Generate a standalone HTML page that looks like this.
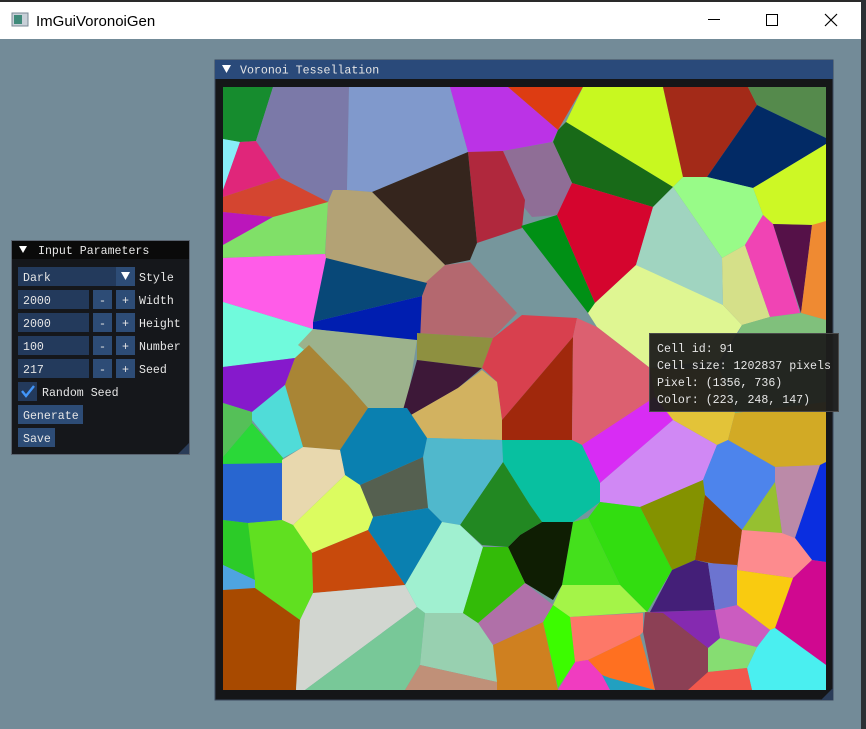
<!DOCTYPE html>
<html><head><meta charset="utf-8"><style>
html,body{margin:0;padding:0;width:866px;height:729px;overflow:hidden;background:#738b98;}
svg{position:absolute;left:0;top:0}
.t{font-family:"Liberation Mono",monospace;font-size:11.6px;fill:#e6e6e6}
</style></head><body>
<svg width="866" height="729" viewBox="0 0 866 729" xmlns="http://www.w3.org/2000/svg">
<rect x="0" y="0" width="866" height="729" fill="#738b98"/>
<rect x="0" y="0" width="866" height="2" fill="#2a2a2a"/>
<rect x="861" y="0" width="5" height="729" fill="#2b2f33"/>
<rect x="0" y="2" width="861" height="37" fill="#ffffff"/>
<rect x="12" y="13" width="16" height="13" fill="#c8d0d8" stroke="#7a8894"/>
<rect x="14" y="15" width="8" height="9" fill="#3f8a7a"/>
<text x="36" y="26" font-family="Liberation Sans,sans-serif" font-size="15" fill="#000">ImGuiVoronoiGen</text>
<line x1="708" y1="19.5" x2="720" y2="19.5" stroke="#000" stroke-width="1"/>
<rect x="766.5" y="14.5" width="11" height="11" fill="none" stroke="#000"/>
<path d="M825 14 L837 26 M837 14 L825 26" stroke="#000" stroke-width="1.2"/>

<rect x="215" y="60" width="618" height="640" fill="#151618" stroke="#3b4a5e"/>
<rect x="215" y="60" width="618" height="19" fill="#2a4a7a"/>
<path d="M222 65 L231 65 L226.5 73 Z" fill="#fff"/>
<text x="240" y="73.5" class="t">Voronoi Tessellation</text>
<path d="M833 688 L833 700 L821 700 Z" fill="#2a3c58"/>

<g>
<rect x="223" y="87" width="603" height="603" fill="#76969c"/>
<polygon fill="#168c2e" points="223,87 273,87 256,141 240,142 223,139"/>
<polygon fill="#7b79a8" points="273,87 349,87 347,190 333,190 328,202 281,178 256,141"/>
<polygon fill="#8099cc" points="349,87 450,87 468,152 372,192 347,190"/>
<polygon fill="#bb33e6" points="450,87 508,87 558,130 552,142 503,151 468,152"/>
<polygon fill="#dd3c12" points="508,87 583,87 558,130"/>
<polygon fill="#c8f820" points="583,87 663,87 683,177 673,187 566,122"/>
<polygon fill="#a32a18" points="663,87 748,87 757,105 707,177 683,177"/>
<polygon fill="#558a4c" points="748,87 826,87 826,138 757,105"/>
<polygon fill="#022a65" points="757,105 826,138 826,144 753,188 707,177"/>
<polygon fill="#cdf825" points="753,188 826,144 826,222 812,225 773,224 763,215"/>
<polygon fill="#98fb88" points="673,187 683,177 707,177 753,188 763,215 745,245 722,258"/>
<polygon fill="#186a18" points="566,122 673,187 653,207 572,183 553,142 558,130"/>
<polygon fill="#8f6e96" points="503,151 553,142 572,183 557,215 532,217 522,205"/>
<polygon fill="#b0283d" points="468,152 503,151 525,200 522,228 477,243"/>
<polygon fill="#35251d" points="372,192 468,152 477,243 470,260 445,265"/>
<polygon fill="#b3a275" points="347,190 372,192 445,265 427,283 422,288 391,276 325,258 328,202 333,190"/>
<polygon fill="#b4686f" points="445,265 470,262 517,313 493,338 417,333 422,295 425,283"/>
<polygon fill="#009015" points="521,226 557,215 595,303 588,313"/>
<polygon fill="#d5052e" points="557,215 572,183 653,207 636,265 595,303"/>
<polygon fill="#a0d4c0" points="673,187 722,258 723,305 688,290 636,265 653,207"/>
<polygon fill="#dff692" points="595,303 636,265 723,305 742,325 720,360 650,368 597,327 588,313"/>
<polygon fill="#d5e089" points="722,258 745,245 770,317 742,325 723,305"/>
<polygon fill="#f044b4" points="745,245 763,215 773,224 800,313 770,317"/>
<polygon fill="#551148" points="773,224 812,225 801,313"/>
<polygon fill="#ef8a32" points="812,225 826,221 826,320 801,313"/>
<polygon fill="#80c07c" points="742,325 770,317 801,313 826,320 826,402 735,413 720,370"/>
<polygon fill="#88eef8" points="223,139 240,142 223,190"/>
<polygon fill="#e0267a" points="240,142 256,141 281,178 223,197 223,190"/>
<polygon fill="#d44530" points="223,197 281,178 328,202 326,206 273,217 223,212"/>
<polygon fill="#bb16bb" points="223,212 273,217 223,245"/>
<polygon fill="#80e068" points="223,245 273,217 328,202 325,254 223,258"/>
<polygon fill="#ff5ce8" points="223,258 325,254 326,258 313,329 223,302"/>
<polygon fill="#084878" points="326,258 427,283 422,296 313,322"/>
<polygon fill="#001eb0" points="313,322 422,296 420,341 313,329"/>
<polygon fill="#70fadc" points="223,302 313,329 309,345 295,358 223,367"/>
<polygon fill="#8619cc" points="223,367 295,358 285,385 252,412 223,403"/>
<polygon fill="#9cb28c" points="313,329 417,340 410,385 407,408 368,408 348,385 298,345"/>
<polygon fill="#a98535" points="309,345 348,385 368,408 340,450 303,447 285,385 295,358"/>
<polygon fill="#8e9040" points="417,333 493,338 482,368 417,360"/>
<polygon fill="#3d1838" points="417,360 482,368 458,388 411,415 403,410 410,385"/>
<polygon fill="#d8404e" points="482,368 493,338 522,315 577,318 573,337 502,420 497,382"/>
<polygon fill="#d2b260" points="411,415 458,388 482,370 497,382 502,420 502,440 427,438"/>
<polygon fill="#a0280c" points="502,420 573,337 572,440 502,440"/>
<polygon fill="#dc6070" points="577,318 597,327 650,368 660,400 582,445 572,440 573,337"/>
<polygon fill="#e3c338" points="650,368 720,370 735,413 728,440 717,445 673,420 655,397"/>
<polygon fill="#d82cf4" points="582,445 655,397 673,420 600,483"/>
<polygon fill="#d088f4" points="600,483 673,420 717,445 703,480 640,507 600,502"/>
<polygon fill="#d2aa25" points="735,413 826,402 826,465 775,467 728,440"/>
<polygon fill="#4d84ec" points="717,445 728,440 775,467 775,482 742,530 705,495 703,480"/>
<polygon fill="#bb8aa8" points="775,467 820,465 795,538 782,533 775,482"/>
<polygon fill="#0a2ee0" points="820,465 826,462 826,562 812,560 795,538"/>
<polygon fill="#96c030" points="775,482 782,533 742,530"/>
<polygon fill="#849200" points="640,507 703,480 705,495 695,560 672,570"/>
<polygon fill="#984200" points="705,495 742,530 737,568 695,560"/>
<polygon fill="#fd8b8e" points="742,530 782,533 795,538 812,560 793,578 737,570"/>
<polygon fill="#d00890" points="793,578 812,560 826,562 826,665 775,628"/>
<polygon fill="#f9cb10" points="737,570 793,578 775,628 770,630 737,605"/>
<polygon fill="#4aeff0" points="770,630 775,628 826,665 826,690 752,690 747,668 757,647"/>
<polygon fill="#86dd72" points="708,648 720,638 757,647 747,668 708,672"/>
<polygon fill="#cb5cc0" points="715,610 737,605 770,630 757,647 720,638"/>
<polygon fill="#852ab0" points="650,612 715,610 720,638 708,648"/>
<polygon fill="#441f78" points="672,570 695,560 708,563 715,610 650,612"/>
<polygon fill="#6c74d0" points="708,563 737,565 737,605 715,610"/>
<polygon fill="#8c4055" points="645,612 663,613 708,648 708,690 655,690 643,632"/>
<polygon fill="#f2584c" points="708,672 747,668 752,690 688,690"/>
<polygon fill="#08c0a0" points="502,440 572,440 582,445 600,483 600,502 573,522 542,522 530,505 503,462"/>
<polygon fill="#32dd10" points="588,518 600,502 640,507 672,570 647,612 620,585"/>
<polygon fill="#44e01c" points="573,522 588,518 620,585 562,585"/>
<polygon fill="#a4f448" points="562,585 620,585 647,612 570,617 553,605"/>
<polygon fill="#fd7868" points="570,617 643,613 643,632 640,635 588,660 575,662"/>
<polygon fill="#ff7020" points="588,660 640,635 655,690 610,690 602,675"/>
<polygon fill="#22a0c0" points="602,675 610,678 655,690 605,690"/>
<polygon fill="#f03cc0" points="558,690 575,662 588,660 602,675 610,690"/>
<polygon fill="#3cfc00" points="553,605 570,617 575,662 558,688 543,622"/>
<polygon fill="#cf8020" points="493,645 543,622 558,690 497,690"/>
<polygon fill="#b070a8" points="478,623 525,583 553,605 543,622 493,645"/>
<polygon fill="#0f1e03" points="508,547 520,535 542,522 573,522 562,585 553,600 525,583"/>
<polygon fill="#228822" points="503,462 530,505 542,522 520,535 508,547 482,545 460,525"/>
<polygon fill="#50b8cc" points="427,438 502,440 503,462 460,525 442,522 428,508 423,458"/>
<polygon fill="#556050" points="360,485 423,457 428,508 373,517"/>
<polygon fill="#0a80b0" points="368,408 407,408 427,438 423,457 360,485 345,475 340,450"/>
<polygon fill="#0a80b0" points="373,517 428,508 442,522 405,585 368,530"/>
<polygon fill="#50dcd8" points="252,412 285,385 303,447 283,458 252,420"/>
<polygon fill="#55c058" points="223,403 252,412 252,423 223,457"/>
<polygon fill="#2ad838" points="252,423 283,458 282,464 223,464 223,457"/>
<polygon fill="#2866d0" points="223,464 282,463 282,520 248,523 223,520"/>
<polygon fill="#e8d8ae" points="282,460 303,447 340,450 345,475 293,525 282,520"/>
<polygon fill="#dcfc60" points="345,475 360,485 373,517 368,530 312,553 293,525"/>
<polygon fill="#c84a0c" points="312,553 368,530 405,585 313,593"/>
<polygon fill="#60e020" points="248,523 282,520 293,525 312,553 313,593 300,620 255,588"/>
<polygon fill="#2ccb28" points="223,520 248,523 255,580 223,565"/>
<polygon fill="#4ea4e0" points="223,565 255,580 255,590 223,590"/>
<polygon fill="#a84a00" points="223,590 255,588 300,620 296,690 223,690"/>
<polygon fill="#d2d6d0" points="300,620 313,593 405,585 417,607 305,690 296,690"/>
<polygon fill="#78c898" points="417,607 425,613 420,665 405,690 305,690"/>
<polygon fill="#98d0b0" points="425,613 463,613 478,623 493,645 497,682 420,665"/>
<polygon fill="#c09078" points="420,665 497,682 497,690 405,690"/>
<polygon fill="#a0f0d0" points="405,585 442,522 460,525 483,547 463,613 425,613 417,607"/>
<polygon fill="#33bb08" points="483,547 508,547 525,583 478,623 463,613"/>
</g>

<rect x="649.5" y="333.5" width="189" height="78" fill="#1d1d1c" fill-opacity="0.95" stroke="#4a4a4a"/>
<text x="657" y="352" class="t">Cell id: 91</text>
<text x="657" y="369" class="t">Cell size: 1202837 pixels</text>
<text x="657" y="386" class="t">Pixel: (1356, 736)</text>
<text x="657" y="403" class="t">Color: (223, 248, 147)</text>

<rect x="11.5" y="240.5" width="178" height="214" fill="#15171b" stroke="#5a6470"/>
<rect x="12" y="241" width="177" height="18" fill="#0a0a0a"/>
<path d="M19 246 L27 246 L23 253 Z" fill="#fff"/>
<text x="38" y="254" class="t">Input Parameters</text>
<rect x="18" y="267" width="98" height="19" fill="#233a5c"/>
<rect x="116" y="267" width="19" height="19" fill="#2d4c76"/>
<path d="M121 272 L130 272 L125.5 280 Z" fill="#fff"/>
<text x="23" y="281" class="t">Dark</text>
<text x="139" y="281" class="t">Style</text>
<g>
<rect x="18" y="290" width="71" height="19" fill="#233a5c"/><rect x="93" y="290" width="19" height="19" fill="#2d4c76"/><rect x="116" y="290" width="19" height="19" fill="#2d4c76"/>
<text x="23" y="304" class="t">2000</text><text x="99" y="304" class="t">-</text><text x="122" y="304" class="t">+</text><text x="139" y="304" class="t">Width</text>
<rect x="18" y="313" width="71" height="19" fill="#233a5c"/><rect x="93" y="313" width="19" height="19" fill="#2d4c76"/><rect x="116" y="313" width="19" height="19" fill="#2d4c76"/>
<text x="23" y="327" class="t">2000</text><text x="99" y="327" class="t">-</text><text x="122" y="327" class="t">+</text><text x="139" y="327" class="t">Height</text>
<rect x="18" y="336" width="71" height="19" fill="#233a5c"/><rect x="93" y="336" width="19" height="19" fill="#2d4c76"/><rect x="116" y="336" width="19" height="19" fill="#2d4c76"/>
<text x="23" y="350" class="t">100</text><text x="99" y="350" class="t">-</text><text x="122" y="350" class="t">+</text><text x="139" y="350" class="t">Number</text>
<rect x="18" y="359" width="71" height="19" fill="#233a5c"/><rect x="93" y="359" width="19" height="19" fill="#2d4c76"/><rect x="116" y="359" width="19" height="19" fill="#2d4c76"/>
<text x="23" y="373" class="t">217</text><text x="99" y="373" class="t">-</text><text x="122" y="373" class="t">+</text><text x="139" y="373" class="t">Seed</text>
</g>
<rect x="18" y="382" width="19" height="19" fill="#233a5c"/>
<path d="M22 391 L26 396 L34 386" stroke="#4296fa" stroke-width="2.4" fill="none"/>
<text x="42" y="396" class="t">Random Seed</text>
<rect x="18" y="405" width="65" height="19" fill="#2d4c76"/>
<text x="23" y="419" class="t">Generate</text>
<rect x="18" y="428" width="37" height="19" fill="#2d4c76"/>
<text x="23" y="442" class="t">Save</text>
<path d="M189 443 L189 454 L178 454 Z" fill="#2a3c58"/>
</svg>
</body></html>
